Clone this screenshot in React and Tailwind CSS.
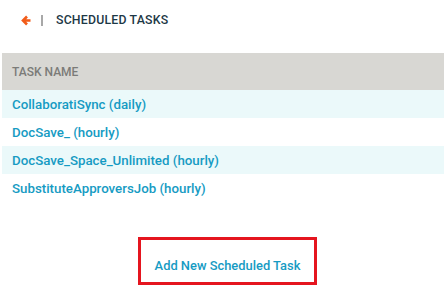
import React from "react";

const tasks = [
  "CollaboratiSync (daily)",
  "DocSave_ (hourly)",
  "DocSave_Space_Unlimited (hourly)",
  "SubstituteApproversJob (hourly)",
];

export default function App() {
  return (
    <div className="w-[444px] h-[293px] bg-white overflow-hidden" style={{ fontFamily: 'Roboto, "Liberation Sans", Arial, sans-serif' }}>
      <div className="flex items-center h-[40px] pl-[21px] pt-[1px]">
        <svg width="10" height="11" viewBox="0 0 10 11" className="block">
          <path d="M9.5 5.5 H2.5 M6 1.5 L2 5.5 L6 9.5" stroke="#f25c19" strokeWidth="2.6" fill="none" strokeLinecap="butt" strokeLinejoin="miter" />
        </svg>
        <div className="ml-[10px] w-[2px] h-[11px] bg-[#a8a8a8]" />
        <div className="ml-[13px] text-[12.3px] font-medium text-[#1d3846] tracking-[0.2px]">SCHEDULED TASKS</div>
      </div>
      <div className="ml-[2px] mt-[13px]">
        <div className="h-[37px] bg-[#d8d7d3] flex items-center pl-[10px] pt-[1px] text-[12px] text-[#7b7b78] font-medium">TASK NAME</div>
        {tasks.map((t, i) => (
          <div key={t} className={`h-[28px] flex items-center pl-[10px] pt-[2px] text-[13.3px] font-medium text-[#169bc3] ${i % 2 === 0 ? "bg-[#ebf9fa]" : "bg-white"}`}>
            {t}
          </div>
        ))}
      </div>
      <div className="flex justify-center mt-[35px] pl-[11px]">
        <div className="w-[179px] h-[48px] border-[3px] border-[#e5151f] flex items-center justify-center pt-[10px] text-[12.9px] font-medium text-[#169bc3]">
          Add New Scheduled Task
        </div>
      </div>
    </div>
  );
}
